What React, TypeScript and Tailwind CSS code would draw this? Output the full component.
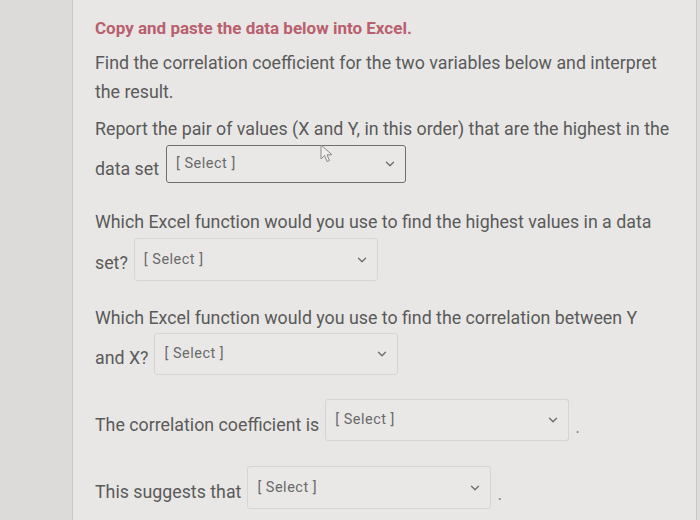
import { ChevronDown } from "lucide-react";

function Select({
  dark = false,
  h = "h-[42px]",
  w = "w-[244px]",
}: {
  dark?: boolean;
  h?: string;
  w?: string;
}) {
  return (
    <div
      className={`${w} ${h} flex items-center justify-between pl-[9px] pr-[8px] rounded-[3px] bg-[#e9e8e6] border ${
        dark ? "border-[#6f6f6f] border-[1.5px]" : "border-[#d6d5d3]"
      }`}
    >
      <span className="text-[14.5px] text-[#6a6a6a] tracking-[0.5px] whitespace-pre">[ Select ]</span>
      <ChevronDown className="w-[14px] h-[14px] text-[#6d6d6d]" strokeWidth={2.3} />
    </div>
  );
}

function Cursor() {
  return (
    <svg className="absolute left-[320px] top-[144px]" width="16" height="20" viewBox="0 0 16 20">
      <path
        d="M1 1 L1 15 L4.5 11.5 L7 17.5 L9.5 16.5 L7 10.8 L12 10.8 Z"
        fill="#efeeec"
        stroke="#8a8a8a"
        strokeWidth="1"
        strokeLinejoin="round"
      />
    </svg>
  );
}

export default function App() {
  return (
    <div className="relative w-[700px] h-[520px] flex overflow-hidden bg-[#dedddb] font-['Roboto',sans-serif] text-[#5a5a5a]">
      <div className="w-[72px] shrink-0 bg-[#dcdbd9]" />
      <div className="w-[625px] shrink-0 border-l border-r border-[#c8c7c5] bg-[#e8e7e5] pl-[22px] pr-[8px] pt-[16px]">
        {/* Title */}
        <h1 className="text-[17px] leading-[24px] font-bold text-[#b95f6e]">
          Copy and paste the data below into Excel.
        </h1>

        <p className="mt-[8px] text-[17.8px] leading-[29px] w-[585px]">
          Find the correlation coefficient for the two variables below and interpret the result.
        </p>

        <p className="mt-[8px] text-[17.8px] leading-[29px]">
          Report the pair of values (X and Y, in this order) that are the highest in the
        </p>
        <div className="mt-[2px] flex items-center gap-[7px] text-[17.8px]">
          <span className="pt-[11px]">data set</span>
          <Select dark h="h-[38px]" w="w-[240px]" />
        </div>

        <p className="mt-[24px] text-[17.8px] leading-[29px]">
          Which Excel function would you use to find the highest values in a data
        </p>
        <div className="mt-[2px] flex items-center gap-[6px] text-[17.8px]">
          <span className="pt-[8px]">set?</span>
          <Select h="h-[43px]" />
        </div>

        <p className="mt-[22px] text-[17.8px] leading-[29px]">
          Which Excel function would you use to find the correlation between Y
        </p>
        <div className="mt-[1px] flex items-center gap-[6px] text-[17.8px]">
          <span className="pt-[8px]">and X?</span>
          <Select />
        </div>

        <div className="mt-[24px] flex items-center gap-[6px] text-[17.8px]">
          <span className="pt-[10px]">The correlation coefficient is</span>
          <Select />
          <span className="pt-[14px] text-[#8a8a8a]">.</span>
        </div>

        <div className="mt-[25px] flex items-center gap-[6px] text-[17.8px]">
          <span className="pt-[9px]">This suggests that</span>
          <Select h="h-[43px]" />
          <span className="pt-[14px] text-[#8a8a8a]">.</span>
        </div>
      </div>
      <Cursor />
    </div>
  );
}
